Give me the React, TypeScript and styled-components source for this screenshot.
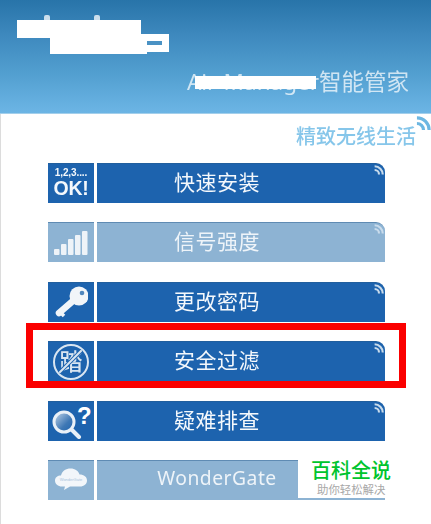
import React from "react"
import styled, { createGlobalStyle } from "styled-components"

const Global = createGlobalStyle`
  html, body {
    margin: 0;
    padding: 0;
    background: #fff;
  }
  body {
    font-family: "Noto Sans", "Noto Sans CJK SC", sans-serif;
  }
`

const Page = styled.div`
  position: relative;
  width: 431px;
  height: 524px;
  overflow: hidden;
  background: #fff;
  box-shadow: inset 1px 0 #dcdcdc;
`

const Header = styled.header`
  position: relative;
  box-sizing: border-box;
  height: 114px;
  padding: 64px 22px 0 0;
  display: flex;
  justify-content: flex-end;
  background: linear-gradient(#2874a9 0%, #3d88bd 30%, #529fd0 65%, #6cb5e5 100%);
  border-bottom: 1px solid #a3cfeb;
`

const AppTitle = styled.div`
  font-size: 22.5px;
  line-height: 36px;
  color: rgba(255, 255, 255, 0.72);
  white-space: nowrap;
  filter: blur(0.3px);
`

/* white patches painted over the logo and product name in the source */
const LogoCover = styled.div`
  position: absolute;
  left: 17px;
  top: 15px;
  width: 152px;
`

const LogoTips = styled.div`
  display: flex;
  gap: 44px;
  height: 5px;
  padding-left: 27px;
`

const LogoTip = styled.span`
  width: 6px;
  border-radius: 2px 2px 0 0;
  background: rgba(255, 255, 255, 0.75);
`

const LogoMask = styled.div`
  position: relative;
  height: 34px;
  background: #fff;
  clip-path: polygon(0 0, 124px 0, 124px 14px, 152px 14px, 152px 32px, 130px 32px, 130px 34px, 33px 34px, 33px 18px, 0 18px);

  &::after {
    content: "";
    position: absolute;
    left: 130px;
    top: 21px;
    width: 15px;
    height: 4px;
    background: #4a92c4;
  }
`

const TitleCover = styled.div`
  position: absolute;
  left: 195px;
  top: 76px;
  width: 121px;
  height: 13px;
  background: #fff;
`

const Tagline = styled.div`
  box-sizing: border-box;
  height: 49px;
  padding: 2px 0 0 0;
  display: flex;
  justify-content: flex-end;
  align-items: flex-start;
`

const TaglineText = styled.span`
  margin-top: 8px;
  font-size: 20px;
  line-height: 26px;
  font-weight: 500;
  color: #86c6ea;
  white-space: nowrap;
  filter: blur(0.4px);
`

const Menu = styled.div`
  display: flex;
  flex-direction: column;
  gap: 19.4px;
  margin-left: 48px;
  width: 337px;
`

const Row = styled.div<{ $off?: boolean }>`
  display: flex;
  gap: 3px;
  height: 40px;
  color: ${(p) => (p.$off ? "rgba(255,255,255,0.85)" : "#f4f8fc")};
  --tile: ${(p) => (p.$off ? "#8db3d3" : "#1d63ae")};
`

const IconTile = styled.div`
  flex: 0 0 46px;
  display: flex;
  align-items: center;
  justify-content: center;
  background: var(--tile);
  border-top: 1px solid rgba(40, 90, 140, 0.45);
  box-sizing: border-box;
`

const Bar = styled.div<{ $fontSize: number }>`
  position: relative;
  flex: 1;
  box-sizing: border-box;
  padding: 0 48px 5px 0;
  display: flex;
  align-items: center;
  justify-content: center;
  background: var(--tile);
  border-top: 1px solid rgba(40, 90, 140, 0.45);
  border-radius: 0 9px 0 0;
  font-size: ${(p) => p.$fontSize}px;
  letter-spacing: 0.5px;
  filter: blur(0.25px);
`

const BarSignal = styled.div`
  position: absolute;
  top: 1px;
  right: 1px;
  display: flex;
`

const OkBadge = styled.div`
  display: flex;
  flex-direction: column;
  align-items: center;
  font-family: "Liberation Sans", sans-serif;
  font-weight: 700;
  line-height: 1;
  filter: blur(0.25px);
`

const OkSteps = styled.span`
  font-size: 10px;
  letter-spacing: -0.1px;
`

const OkWord = styled.span`
  font-size: 19.5px;
  letter-spacing: -0.3px;
  margin-top: 1px;
`

const NoStep = styled.div`
  position: relative;
  box-sizing: border-box;
  width: 36px;
  height: 36px;
  border: 2.5px solid #d9e5f1;
  border-radius: 50%;
  display: flex;
  align-items: center;
  justify-content: center;
  font-size: 23px;
  font-weight: 500;
  line-height: 1;
  color: #d9e5f1;
  overflow: hidden;
  filter: blur(0.3px);

  &::after {
    content: "";
    position: absolute;
    left: -3px;
    right: -3px;
    top: 14px;
    height: 2px;
    background: #d9e5f1;
    box-shadow: 0 0 0 1px #1d63ae;
    transform: rotate(-45deg);
  }
`

const Watermark = styled.div`
  position: absolute;
  left: 298px;
  top: 457px;
  width: 97px;
  height: 41px;
  box-sizing: border-box;
  padding: 0 0 0 13px;
  background: #fff;
  font-family: "Noto Sans CJK SC", sans-serif;
`

const WatermarkName = styled.div`
  font-size: 20px;
  line-height: 25px;
  font-weight: 500;
  color: #00c42e;
  white-space: nowrap;
`

const WatermarkNote = styled.div`
  font-size: 11.4px;
  line-height: 14px;
  color: #a8a8a8;
  margin-left: 6px;
  white-space: nowrap;
`

const Highlight = styled.div`
  position: absolute;
  left: 26px;
  top: 323px;
  width: 380px;
  height: 65px;
  box-sizing: border-box;
  border: 7px solid #fb0000;
`

const Waves = ({ size, color }: { size: number; color: string }) => (
  <svg width={size} height={size} viewBox="0 0 16 16" fill="none" stroke={color}>
    <path d="M1 2A13 13 0 0 1 14 15" strokeWidth="3.4" />
    <path d="M1 8A7 7 0 0 1 8 15" strokeWidth="3.4" />
  </svg>
)

const SignalIcon = () => (
  <svg width="34" height="24" viewBox="0 0 34 24" fill="#eef3f8">
    <rect x="0" y="18" width="5.500" height="6" rx="1" />
    <rect x="7" y="13" width="5.500" height="11" rx="1" />
    <rect x="14" y="8" width="5.500" height="16" rx="1" />
    <rect x="21" y="4" width="5.500" height="20" rx="1" />
    <rect x="28" y="0" width="5.500" height="24" rx="1" />
  </svg>
)

const KeyIcon = () => (
  <svg width="34" height="34" viewBox="0 0 34 34">
    <circle cx="25" cy="11" r="9.500" fill="#f1f5f9" />
    <path d="M20 15L5 28" stroke="#f1f5f9" strokeWidth="6.500" strokeLinecap="round" />
    <path d="M7 28l3 3" stroke="#f1f5f9" strokeWidth="3.500" />
    <circle cx="28" cy="8" r="2.300" fill="#4f86bd" />
  </svg>
)

const SearchIcon = () => (
  <svg width="42" height="36" viewBox="0 0 42 36" fill="none">
    <defs>
      <linearGradient id="lens" x1="0" y1="0" x2="1" y2="1">
        <stop offset="0" stopColor="#c7d8ea" />
        <stop offset="0.6" stopColor="#3f78b5" />
        <stop offset="1" stopColor="#1d63ae" />
      </linearGradient>
    </defs>
    <circle cx="14" cy="19" r="10" fill="url(#lens)" stroke="#e9f0f7" strokeWidth="3" />
    <path d="M22 27l7 7" stroke="#e9f0f7" strokeWidth="4" strokeLinecap="round" />
    <text x="27" y="21" fontFamily="Liberation Sans, sans-serif" fontWeight="700" fontSize="24" fill="#fff">?</text>
  </svg>
)

const CloudIcon = () => (
  <svg width="32" height="24" viewBox="0 0 32 24">
    <path d="M7 18.500C3 18.500 0 16 0 12.500 0 9.500 2.500 7.500 6 7.500 7 3 11 0.500 15.500 0.500c4.500 0 8 2.500 9 6 4.500 0 7.500 2.500 7.500 6 0 3.500-3 6-7 6H15l-6 3.500 1-3.500z" fill="#f2f6fa" />
    <text x="16" y="12.500" textAnchor="middle" fontFamily="Liberation Sans, sans-serif" fontSize="4" fill="#a9c3da">WonderGate</text>
  </svg>
)

const items: { label: string; off?: boolean; size?: number; icon: React.ReactNode }[] = [
  {
    label: "快速安装",
    icon: (
      <OkBadge>
        <OkSteps>1,2,3....</OkSteps>
        <OkWord>OK!</OkWord>
      </OkBadge>
    ),
  },
  { label: "信号强度", off: true, icon: <SignalIcon /> },
  { label: "更改密码", icon: <KeyIcon /> },
  { label: "安全过滤", icon: <NoStep>踏</NoStep> },
  { label: "疑难排查", icon: <SearchIcon /> },
  { label: "WonderGate", off: true, size: 19.3, icon: <CloudIcon /> },
]

export default function App() {
  return (
    <Page>
      <Global />
      <Header>
        <AppTitle>Air-Manager智能管家</AppTitle>
        <LogoCover>
          <LogoTips>
            <LogoTip />
            <LogoTip />
          </LogoTips>
          <LogoMask />
        </LogoCover>
        <TitleCover />
      </Header>
      <Tagline>
        <TaglineText>精致无线生活</TaglineText>
        <Waves size={15} color="#6db7e2" />
      </Tagline>
      <Menu>
        {items.map((item) => (
          <Row key={item.label} $off={item.off}>
            <IconTile>{item.icon}</IconTile>
            <Bar $fontSize={item.size ?? 21}>
              {item.label}
              <BarSignal>
                <Waves size={10} color="#c9dcec" />
              </BarSignal>
            </Bar>
          </Row>
        ))}
      </Menu>
      <Highlight />
      <Watermark>
        <WatermarkName>百科全说</WatermarkName>
        <WatermarkNote>助你轻松解决</WatermarkNote>
      </Watermark>
    </Page>
  )
}
